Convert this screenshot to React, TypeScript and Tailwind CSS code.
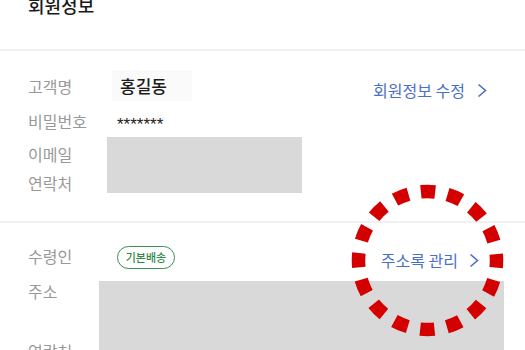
import React from 'react';

const font = { fontFamily: "'Noto Sans CJK KR', 'Noto Sans', sans-serif" };

function Chevron() {
  return (
    <svg width="10" height="15" viewBox="0 0 10 15" fill="none" stroke="currentColor" strokeWidth={1.6}>
      <path d="M1.5 1.5l7 6-7 6" strokeLinejoin="miter" />
    </svg>
  );
}

// red dashed annotation ring drawn over the address link
function DashedRing() {
  const r = 69;
  const period = (2 * Math.PI * r) / 16;
  return (
    <svg className="absolute left-[349px] top-[182px]" width="157" height="157" viewBox="0 0 157 157">
      <circle
        cx="78.5"
        cy="78.5"
        r={r}
        fill="none"
        stroke="#d40000"
        strokeWidth={13.5}
        strokeDasharray={`14.5 ${period - 14.5}`}
        strokeDashoffset={7.25}
      />
    </svg>
  );
}

export default function App() {
  return (
    <div className="relative w-[525px] h-[350px] overflow-hidden bg-white" style={font}>
      {/* Title */}
      <div className="flex flex-col h-[49px] px-7">
        <h1 className="-mt-[5px] text-[18px] leading-[20px] font-medium text-[#1a1a1a]">회원정보</h1>
      </div>
      <div className="h-[2px] bg-[#f1f1f1]" />

      {/* Member info */}
      <div className="pt-[17px] pl-7">
        <div className="flex h-[35px] items-center">
          <span className="w-[79px] text-[16px] text-[#999999]">고객명</span>
          <span className="ml-[5px] w-[80px] h-[31px] flex items-center pl-2 bg-[#fafafa] text-[17px] font-medium text-[#1a1a1a]">
            홍길동
          </span>
          <a className="ml-auto mr-[38px] mt-[9px] flex items-center gap-[12px] text-[16px] text-[#4a6fc6]">
            회원정보 수정
            <Chevron />
          </a>
        </div>
        <div className="flex h-[35px] items-center">
          <span className="w-[89px] text-[16px] text-[#999999]">비밀번호</span>
          <span className="mt-[9px] text-[17px] leading-[20px] text-[#1a1a1a]" style={{ fontFamily: "'Liberation Sans', Arial, sans-serif" }}>
            *******
          </span>
        </div>
        <div className="flex">
          <div className="w-[79px] flex flex-col">
            <span className="h-[31px] flex items-center text-[16px] text-[#999999]">이메일</span>
            <span className="h-[28px] flex items-center text-[16px] text-[#999999]">연락처</span>
          </div>
          <div className="-mt-px w-[195px] h-[56px] bg-[#d9d9d9]" />
        </div>
      </div>

      <div className="mt-[24px] h-[2px] bg-[#f1f1f1]" />

      {/* Delivery */}
      <div className="pt-[17px] pl-7">
        <div className="flex h-[32px] items-center">
          <span className="w-[89px] text-[16px] text-[#999999]">수령인</span>
          <span className="mt-[3px] h-[23px] w-[58px] flex items-center justify-center rounded-full border-[1.5px] border-[#3d8c54] text-[11px] font-medium text-[#2f8a47]">
            기본배송
          </span>
          <a className="ml-auto mr-[46px] mt-[8px] flex items-center gap-[11px] text-[16px] text-[#4a6fc6]">
            주소록 관리
            <Chevron />
          </a>
        </div>
        <div className="mt-[9px] flex">
          <div className="w-[71px] flex flex-col">
            <span className="text-[16px] leading-[20px] text-[#999999]">주소</span>
            <span className="mt-[40px] text-[16px] leading-[20px] text-[#999999]">연락처</span>
          </div>
          <div className="w-[405px] h-[80px] bg-[#d9d9d9]" />
        </div>
      </div>

      <DashedRing />
    </div>
  );
}
